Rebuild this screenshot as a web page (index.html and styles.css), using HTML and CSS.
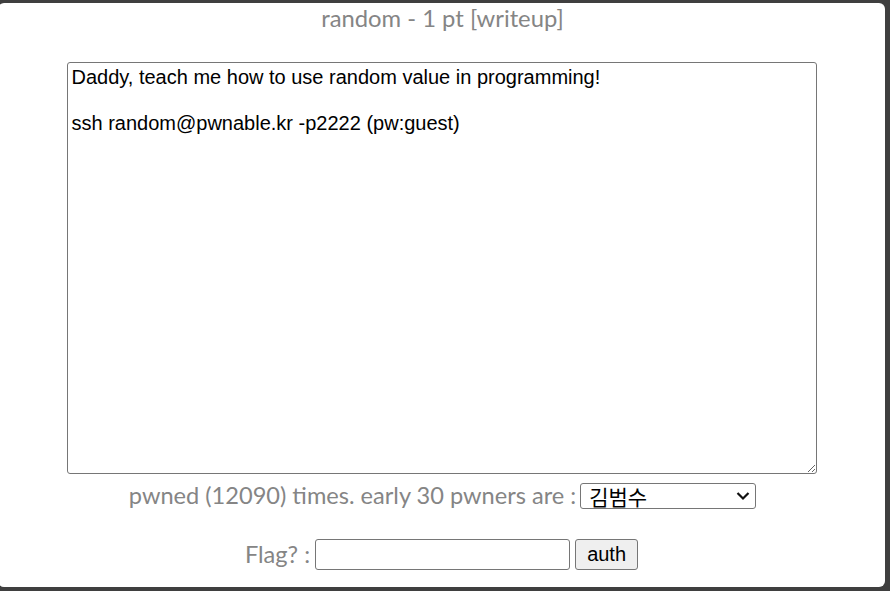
FILE: index.html
```html
<!DOCTYPE html>
<html>
<head>
<meta charset="utf-8">
<link rel="stylesheet" href="styles.css">
</head>
<body>
<div class="panel">
  <div class="title">random - 1 pt [writeup]</div>
  <textarea class="desc">Daddy, teach me how to use random value in programming!

ssh random@pwnable.kr -p2222 (pw:guest)</textarea>
  <div class="row pwned-row">
    <span class="label">pwned (12090) times. early 30 pwners are :</span>
    <div class="select-wrap">
      <select class="pwners">
        <option>김범수</option>
      </select>
      <svg class="chev" width="14" height="10" viewBox="0 0 14 10"><path d="M1.5 2 L7 7.5 L12.5 2" fill="none" stroke="#111" stroke-width="2.2"/></svg>
    </div>
  </div>
  <div class="row flag-row">
    <span class="label">Flag? :</span>
    <input class="flag" type="text">
    <button class="auth">auth</button>
  </div>
</div>
</body>
</html>
```
FILE: styles.css
```css
html, body {
  margin: 0;
  padding: 0;
  background: #3f3f3f;
  height: 100%;
  overflow: hidden;
}
.panel {
  margin-top: 3px;
  margin-left: -2px;
  width: 887px;
  height: 584px;
  background: #fff;
  border-radius: 6px;
  box-sizing: border-box;
  padding-top: 1px;
  display: flex;
  flex-direction: column;
  align-items: center;
  font-family: Lato, "Noto Sans", sans-serif;
  color: #858585;
}
.title {
  font-size: 23.8px;
  line-height: 29px;
  margin-left: 2px;
}
.desc {
  margin-top: 29px;
  width: 750px;
  height: 412px;
  box-sizing: border-box;
  border: 1px solid #767676;
  border-radius: 3px;
  padding: 3px 4px 2px;
  font-family: "Liberation Sans", Arial, sans-serif;
  font-size: 20px;
  line-height: 23px;
  color: #000;
  background: #fff;
  outline: none;
}
.row {
  display: flex;
  align-items: center;
  margin-left: 2px;
}
.pwned-row {
  margin-top: 8px;
  gap: 4px;
}
.label {
  font-size: 23.6px;
  line-height: 27px;
}
.select-wrap {
  position: relative;
}
.pwners {
  appearance: none;
  -webkit-appearance: none;
  width: 176px;
  height: 26px;
  box-sizing: border-box;
  border: 1px solid #767676;
  border-radius: 3px;
  background: #fff;
  padding: 0 0 0 8px;
  font-family: "Noto Sans CJK KR", "Liberation Sans", sans-serif;
  font-size: 21px;
  line-height: 24px;
  color: #000;
}
.chev {
  position: absolute;
  right: 6px;
  top: 8px;
}
.flag-row {
  margin-top: 30px;
  gap: 5px;
  margin-left: 0;
}
.flag {
  width: 255px;
  height: 31px;
  box-sizing: border-box;
  border: 1px solid #767676;
  border-radius: 3px;
  margin: 0;
  font-size: 18px;
}
.auth {
  width: 63px;
  height: 31px;
  box-sizing: border-box;
  border: 1px solid #767676;
  border-radius: 3px;
  background: #efefef;
  margin: 0;
  padding: 0;
  font-family: "Liberation Sans", Arial, sans-serif;
  font-size: 20px;
  color: #000;
}
```
